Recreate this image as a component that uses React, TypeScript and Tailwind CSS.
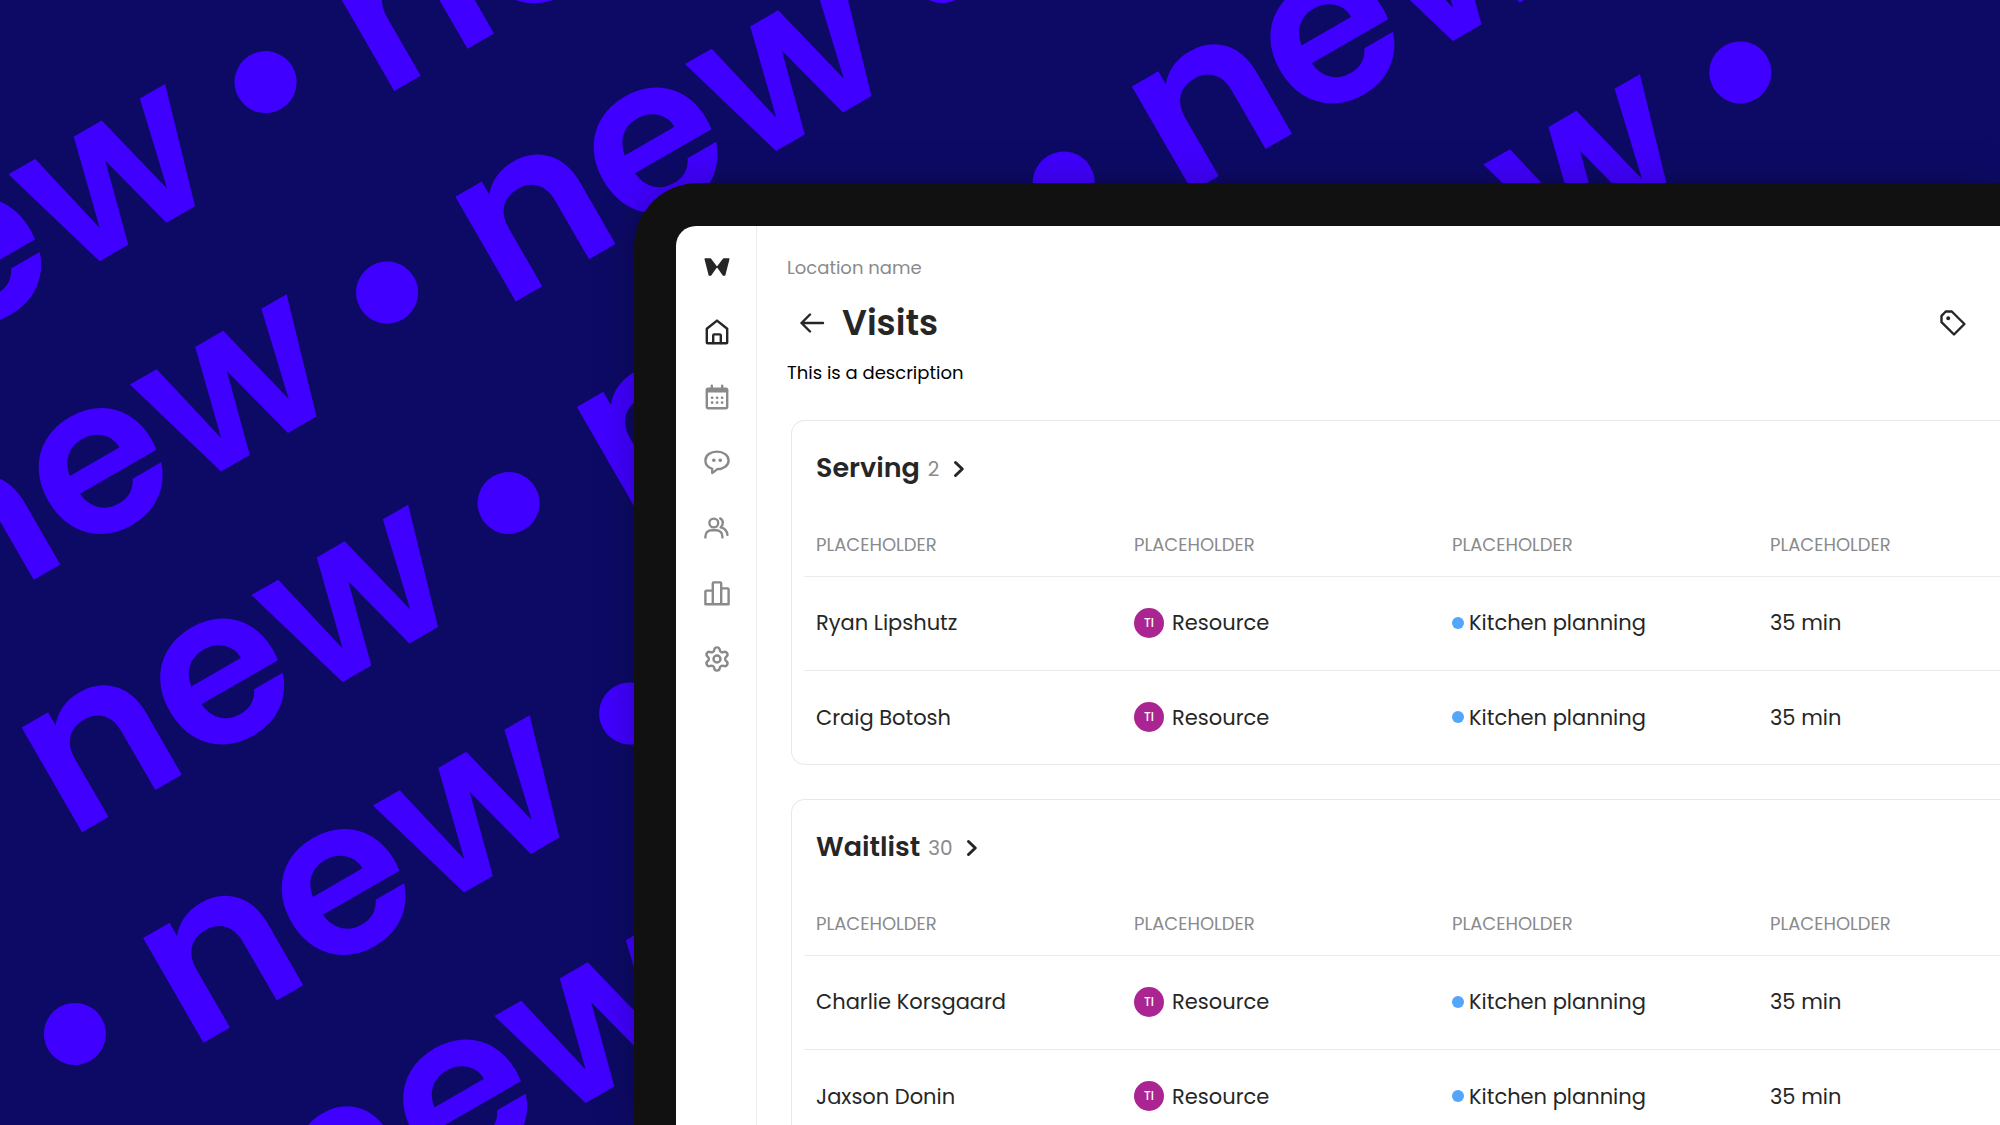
import type { ReactNode } from 'react';
import { Settings } from 'lucide-react';

interface Visit {
  name: string;
  resource: string;
  service: string;
  duration: string;
}

interface VisitCardProps {
  title: string;
  count: number;
  visits: Visit[];
}

const serving: Visit[] = [
  { name: 'Ryan Lipshutz', resource: 'Resource', service: 'Kitchen planning', duration: '35 min' },
  { name: 'Craig Botosh', resource: 'Resource', service: 'Kitchen planning', duration: '35 min' },
];

const waitlist: Visit[] = [
  { name: 'Charlie Korsgaard', resource: 'Resource', service: 'Kitchen planning', duration: '35 min' },
  { name: 'Jaxson Donin', resource: 'Resource', service: 'Kitchen planning', duration: '35 min' },
];

const columns = ['PLACEHOLDER', 'PLACEHOLDER', 'PLACEHOLDER', 'PLACEHOLDER'];

function Icon({ children }: { children: ReactNode }) {
  return (
    <svg
      className="size-[26px]"
      viewBox="0 0 26 26"
      fill="none"
      stroke="currentColor"
      strokeWidth="2.4"
      strokeLinecap="round"
      strokeLinejoin="round"
      aria-hidden="true"
    >
      {children}
    </svg>
  );
}

const navItems = [
  {
    label: 'Home',
    active: true,
    icon: (
      <Icon>
        <path d="M2.8 23.4V9.8L13 1.6l10.2 8.2v13.6a.8.8 0 0 1-.8.8H3.6a.8.8 0 0 1-.8-.8Z" />
        <path d="M9.2 24v-7.6a1 1 0 0 1 1-1h5.6a1 1 0 0 1 1 1V24" />
      </Icon>
    ),
  },
  {
    label: 'Calendar',
    icon: (
      <Icon>
        <rect x="2.8" y="4.6" width="20.4" height="19.6" rx="1.4" />
        <path d="M3 5.5h20M3 7.4h20" />
        <path d="M7.8 1.6v3M18.2 1.6v3" />
        <path d="M8 13.8h.2M13 13.8h.2M18 13.8h.2M8 18.6h.2M13 18.6h.2M18 18.6h.2" strokeWidth="2.6" />
      </Icon>
    ),
  },
  {
    label: 'Messages',
    icon: (
      <Icon>
        <path d="M8.2 24v-4.2C4 18.4 1.4 15.2 1.4 11.4c0-5.2 5.2-8.8 11.6-8.8s11.6 3.8 11.6 8.8-5.2 8.8-11.6 8.800c-1.6 1.700-3.200 2.900-4.800 3.800Z" />
        <path d="M9.8 11.2h.1M16.2 11.2h.1" strokeWidth="3.6" />
      </Icon>
    ),
  },
  {
    label: 'Clients',
    icon: (
      <Icon>
        <circle cx="9.8" cy="8" r="4.4" />
        <path d="M1.4 22.4v-1c0-3.6 2.8-6.2 6.2-6.2h4.6c3.4 0 6.2 2.6 6.2 6.2v1" />
        <path d="M16.2 3.4c1.6.8 2.6 2.5 2.6 4.4 0 2.1-.8 3.5-2.2 4.6 3.8.8 6.4 3.6 6.8 7.4" />
      </Icon>
    ),
  },
  {
    label: 'Reports',
    icon: (
      <Icon>
        <path d="M1.4 24.2V11.600a1 1 0 0 1 1-1h6.400v13.600ZM8.800 24.200V3.400a1 1 0 0 1 1-1h6.400a1 1 0 0 1 1 1v20.800ZM17.200 8.400h6.400a1 1 0 0 1 1 1v14.800h-7.400Z" />
      </Icon>
    ),
  },
  { label: 'Settings', icon: <Settings className="size-7" strokeWidth={2.1} aria-hidden="true" /> },
];

// Slanted "new •" pattern behind the device
function Backdrop() {
  return (
    <div
      aria-hidden="true"
      className="pointer-events-none absolute top-[568px] left-[-828px] origin-top-left -rotate-30 text-[218px] leading-[243px] font-semibold text-[#4000ff] select-none"
    >
      {Array.from({ length: 5 }, (_, row) => (
        <div key={row} className="flex">
          {Array.from({ length: 4 }, (_, col) => (
            <div key={col} className="flex h-[243px] w-[641px] shrink-0 items-center">
              <span className="w-[518px]">new</span>
              <span className="mt-2 size-[62px] rounded-full bg-[#4000ff]" />
            </div>
          ))}
        </div>
      ))}
    </div>
  );
}

function Sidebar() {
  return (
    <aside className="flex w-[81px] shrink-0 flex-col items-center border-r border-[#ededed] pt-8 pl-0.5">
      <a href="#" aria-label="Dashboard" className="text-[#262626]">
        <svg className="h-[18px] w-[26px]" viewBox="0 0 26 18" fill="currentColor" stroke="currentColor" strokeWidth="1.6" strokeLinejoin="round">
          <path d="M1.3 1h5L12 8.600v.8L6.600 17H5.400Z" />
          <path d="M24.700 1h-5L14 8.600v.8l5.400 7.600h1.200Z" />
          <path d="M11 9h4" />
        </svg>
      </a>
      <nav className="mt-[43px] flex h-[354px] flex-col items-center justify-between">
        {navItems.map((item) => (
          <a key={item.label} href="#" aria-label={item.label} className={item.active ? 'text-[#262626]' : 'text-[#8a8a8a]'}>
            {item.icon}
          </a>
        ))}
      </nav>
    </aside>
  );
}

function VisitCard({ title, count, visits }: VisitCardProps) {
  return (
    <section className="rounded-l-[14px] border border-r-0 border-[#e8e8e8] pt-6 pl-3">
      <div className="flex h-[47px] items-center pl-3">
        <h2 className="text-[27px] font-semibold">{title}</h2>
        <span className="ml-2 text-xl text-[#8a8a8a]">{count}</span>
        <button type="button" aria-label={`Open ${title}`} className="ml-[13px]">
          <svg className="h-[18px] w-[14px]" viewBox="0 0 14 18" fill="none" stroke="currentColor" strokeWidth="3" strokeLinecap="round" strokeLinejoin="round">
            <path d="m3.5 2.5 6.8 6.5-6.8 6.5" />
          </svg>
        </button>
      </div>
      <table className="mt-[23px] w-full table-fixed text-left">
        <colgroup>
          <col className="w-[318px]" />
          <col className="w-[318px]" />
          <col className="w-[318px]" />
          <col />
        </colgroup>
        <thead>
          <tr className="h-[61px] border-b border-[#ebebeb]">
            {columns.map((column, index) => (
              <th key={index} className="pl-3 text-lg font-normal text-[#8a8a8a]">
                {column}
              </th>
            ))}
          </tr>
        </thead>
        <tbody className="text-[21px]">
          {visits.map((visit) => (
            <tr key={visit.name} className="h-[94px] border-b border-[#ebebeb] last:border-b-0">
              <td className="pl-3">{visit.name}</td>
              <td className="pl-3">
                <div className="flex items-center gap-2">
                  <span className="flex size-[30px] items-center justify-center rounded-full bg-[#ab2592] text-xs font-medium text-white">
                    TI
                  </span>
                  {visit.resource}
                </div>
              </td>
              <td className="pl-3">
                <div className="flex items-center gap-[5px]">
                  <span className="size-3 rounded-full bg-[#54a6fa]" />
                  {visit.service}
                </div>
              </td>
              <td className="pl-3">{visit.duration}</td>
            </tr>
          ))}
        </tbody>
      </table>
    </section>
  );
}

export default function App() {
  return (
    <div className="relative flex h-screen overflow-hidden bg-[#0d0a66] pt-[183px] pl-[31.7%] font-['Poppins','Inter',sans-serif] text-[#262626]">
      <Backdrop />
      <div className="relative flex min-w-0 flex-1 rounded-tl-[64px] bg-[#111111] pt-[43px] pl-[42px] shadow-[0_0_40px_rgba(0,0,0,0.25)]">
        <div className="flex min-w-0 flex-1 overflow-hidden rounded-tl-[20px] bg-white">
          <Sidebar />
          <main className="min-w-0 flex-1 pt-[30px]">
            <header className="pr-[34px] pl-[30px]">
              <p className="text-lg leading-6 text-[#8a8a8a]">Location name</p>
              <div className="mt-[19px] flex h-12 items-center">
                <button type="button" aria-label="Back" className="ml-3">
                  <svg className="h-5 w-[26px]" viewBox="0 0 26 20" fill="none" stroke="currentColor" strokeWidth="2.4" strokeLinecap="round" strokeLinejoin="round">
                    <path d="M24 10H2.5M11 1.5 2.5 10l8.5 8.5" />
                  </svg>
                </button>
                <h1 className="ml-[17px] text-[35px] font-semibold">Visits</h1>
                <button type="button" aria-label="Tags" className="ml-auto">
                  <Icon>
                    <path d="M5.8 1.5h6L24.4 14 14 24.5 1.5 12.2V5.8Z" />
                    <circle cx="8.2" cy="8.2" r="1.2" fill="currentColor" strokeWidth="1.6" />
                  </Icon>
                </button>
              </div>
              <p className="mt-[14px] text-lg leading-6 text-black">This is a description</p>
            </header>
            <div className="mt-[35px] flex flex-col gap-[34px] pl-[34px]">
              <VisitCard title="Serving" count={2} visits={serving} />
              <VisitCard title="Waitlist" count={30} visits={waitlist} />
            </div>
          </main>
        </div>
      </div>
    </div>
  );
}
